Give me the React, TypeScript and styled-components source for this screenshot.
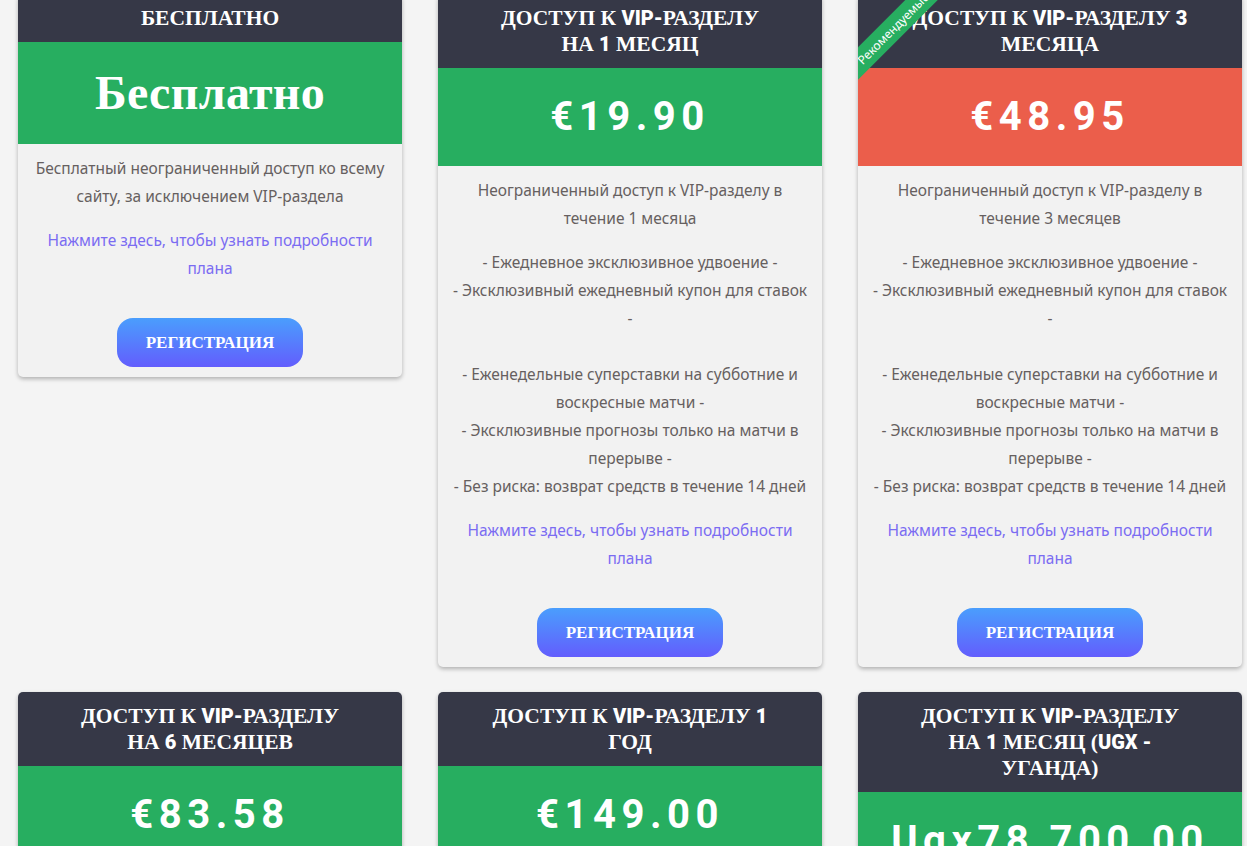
import React from "react";
import styled, { createGlobalStyle } from "styled-components";

const GlobalStyle = createGlobalStyle`
  html, body { margin: 0; padding: 0; background: #f4f4f4; overflow: hidden; }
  body { font-family: "Noto Sans", "Liberation Sans", sans-serif; }
`;

const Grid = styled.div`
  display: grid;
  grid-template-columns: repeat(3, 384px);
  column-gap: 36px;
  row-gap: 25px;
  align-items: start;
  padding-left: 18px;
  margin-top: -6px;
`;

const Card = styled.div`
  position: relative;
  overflow: hidden;
  background: #f2f2f2;
  border-radius: 5px;
  box-shadow: 0 2px 4px rgba(0, 0, 0, 0.28);
  display: flex;
  flex-direction: column;
`;

const Header = styled.div`
  background: #363847;
  color: #ffffff;
  padding: 11px 46px;
  text-align: center;
  font-family: "Liberation Serif", "Times New Roman", serif;
  font-weight: 700;
  font-size: 21.5px;
  line-height: 26px;
`;

const Lat = styled.span`
  font-family: "Roboto", "Liberation Sans", sans-serif;
  font-weight: 900;
  font-size: 20px;
  line-height: 1;
`;

const Price = styled.div<{ $red?: boolean; $serif?: boolean }>`
  background: ${(p) => (p.$red ? "#eb5e4b" : "#27ae60")};
  color: #ffffff;
  text-align: center;
  padding: 20px 0;
  white-space: nowrap;
  font-family: ${(p) =>
    p.$serif ? '"Liberation Serif", "Times New Roman", serif' : '"Roboto", "Liberation Sans", sans-serif'};
  font-weight: 700;
  font-size: ${(p) => (p.$serif ? "48px" : "40px")};
  line-height: ${(p) => (p.$serif ? "62px" : "58px")};
  letter-spacing: ${(p) => (p.$serif ? "0.3px" : "5.5px")};
`;

const Body = styled.div`
  padding: 10px 12px 10px;
  display: flex;
  flex-direction: column;
  align-items: center;
  text-align: center;
  font-size: 15.5px;
  line-height: 28px;
  color: #666060;
`;

const Para = styled.p`
  margin: 0 0 16px;
`;

const LinkText = styled.a`
  display: block;
  color: #7b6cf2;
  text-decoration: none;
  margin: 0 0 36px;
`;

const Button = styled.button`
  border: none;
  border-radius: 16px;
  width: 186px;
  height: 49px;
  background: linear-gradient(180deg, #4a9efd 0%, #635dfd 100%);
  color: #ffffff;
  font-family: "Liberation Serif", "Times New Roman", serif;
  font-weight: 700;
  font-size: 17px;
  cursor: pointer;
`;

const Ribbon = styled.div`
  position: absolute;
  top: 23px;
  left: -45px;
  width: 160px;
  height: 23px;
  line-height: 23px;
  background: #27ae60;
  color: #ffffff;
  font-size: 12px;
  text-align: center;
  transform: rotate(-45deg);
`;

type Plan = {
  title: React.ReactNode;
  price: string;
  red?: boolean;
  serif?: boolean;
  desc: string;
  features?: boolean;
  ribbon?: boolean;
};

const Features = () => (
  <Para>
    - Ежедневное эксклюзивное удвоение -<br />
    - Эксклюзивный ежедневный купон для ставок -<br />
    <br />
    - Еженедельные суперставки на субботние и воскресные матчи -<br />
    - Эксклюзивные прогнозы только на матчи в перерыве -<br />
    - Без риска: возврат средств в течение 14 дней
  </Para>
);

const plans: Plan[] = [
  {
    title: "БЕСПЛАТНО",
    price: "Бесплатно",
    serif: true,
    desc: "Бесплатный неограниченный доступ ко всему сайту, за исключением VIP-раздела",
  },
  {
    title: (
      <>
        ДОСТУП К <Lat>VIP-</Lat>РАЗДЕЛУ НА <Lat>1</Lat> МЕСЯЦ
      </>
    ),
    price: "€19.90",
    desc: "Неограниченный доступ к VIP-разделу в течение 1 месяца",
    features: true,
  },
  {
    title: (
      <>
        ДОСТУП К <Lat>VIP-</Lat>РАЗДЕЛУ <Lat>3</Lat> МЕСЯЦА
      </>
    ),
    price: "€48.95",
    red: true,
    ribbon: true,
    desc: "Неограниченный доступ к VIP-разделу в течение 3 месяцев",
    features: true,
  },
  {
    title: (
      <>
        ДОСТУП К <Lat>VIP-</Lat>РАЗДЕЛУ НА <Lat>6</Lat> МЕСЯЦЕВ
      </>
    ),
    price: "€83.58",
    desc: "Неограниченный доступ к VIP-разделу в течение 6 месяцев",
    features: true,
  },
  {
    title: (
      <>
        ДОСТУП К <Lat>VIP-</Lat>РАЗДЕЛУ <Lat>1</Lat> ГОД
      </>
    ),
    price: "€149.00",
    desc: "Неограниченный доступ к VIP-разделу в течение 1 года",
    features: true,
  },
  {
    title: (
      <>
        ДОСТУП К <Lat>VIP-</Lat>РАЗДЕЛУ НА <Lat>1</Lat> МЕСЯЦ (<Lat>UGX -</Lat> УГАНДА)
      </>
    ),
    price: "Ugx78,700.00",
    desc: "Неограниченный доступ к VIP-разделу в течение 1 месяца",
    features: true,
  },
];

export default function App() {
  return (
    <>
      <GlobalStyle />
      <Grid>
        {plans.map((p, i) => (
          <Card key={i}>
            {p.ribbon && <Ribbon>Рекомендуемые</Ribbon>}
            <Header>{p.title}</Header>
            <Price $red={p.red} $serif={p.serif}>
              {p.price}
            </Price>
            <Body>
              <Para>{p.desc}</Para>
              {p.features && <Features />}
              <LinkText href="#">Нажмите здесь, чтобы узнать подробности плана</LinkText>
              <Button>РЕГИСТРАЦИЯ</Button>
            </Body>
          </Card>
        ))}
      </Grid>
    </>
  );
}
